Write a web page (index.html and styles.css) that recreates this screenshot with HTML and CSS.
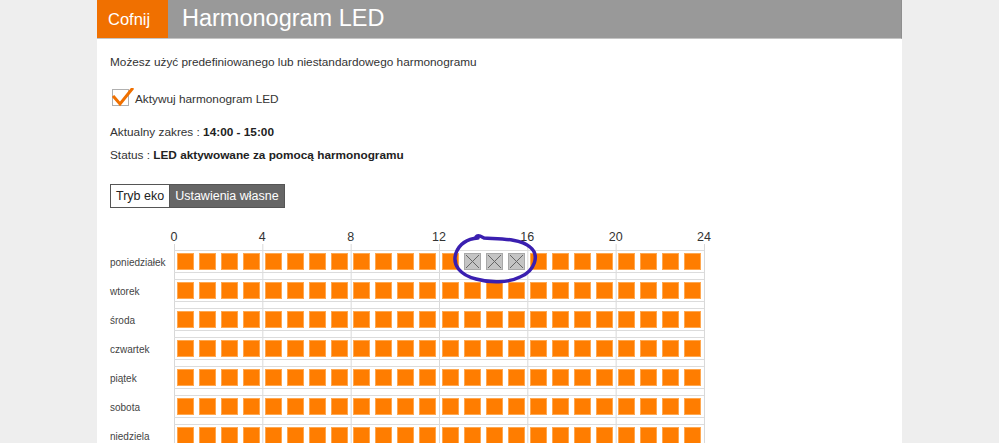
FILE: index.html
```html
<!DOCTYPE html>
<html lang="pl">
<head>
<meta charset="utf-8">
<title>Harmonogram LED</title>
<link rel="stylesheet" href="styles.css">
</head>
<body>
<div class="page">
  <header class="topbar">
    <a class="back">Cofnij</a>
    <h1 class="title">Harmonogram LED</h1>
  </header>
  <main class="content">
    <p class="intro">Możesz użyć predefiniowanego lub niestandardowego harmonogramu</p>
    <label class="check">
      <span class="box"><svg class="tick" width="22" height="20" viewBox="0 0 22 20"><path d="M2 9 L8 16 L20 1" fill="none" stroke="#f07000" stroke-width="3" stroke-linecap="square"/></svg></span>
      <span>Aktywuj harmonogram LED</span>
    </label>
    <p class="info first">Aktualny zakres : <b>14:00 - 15:00</b></p>
    <p class="info">Status : <b>LED aktywowane za pomocą harmonogramu</b></p>
    <div class="tabs">
      <button class="tab">Tryb eko</button>
      <button class="tab active">Ustawienia własne</button>
    </div>
    <div class="schedule" id="schedule">
      <div class="axis"><span>0</span><span>4</span><span>8</span><span>12</span><span>16</span><span>20</span><span>24</span></div>
      <div class="grid" id="grid"></div>
      <svg class="mark" width="110" height="60" viewBox="0 0 110 60"><path d="M26 6 C28 3, 32 6, 34 7 C48 8, 70 7, 80 16 C90 24, 85 40, 70 46 C58 52, 40 52, 26 48 C10 44, 2 34, 6 22 C9 14, 16 8, 28 7" fill="none" stroke="#3a1fb0" stroke-width="3.5" stroke-linecap="round"/></svg>
    </div>
  </main>
</div>
<script>
const days = ["poniedziałek","wtorek","środa","czwartek","piątek","sobota","niedziela"];
const grid = document.getElementById("grid");
days.forEach((d, di) => {
  const lab = document.createElement("span");
  lab.className = "day";
  lab.textContent = d;
  grid.appendChild(lab);
  const track = document.createElement("div");
  track.className = "track";
  for (let h = 0; h < 24; h++) {
    const c = document.createElement("span");
    c.className = "cell";
    const sq = document.createElement("span");
    const off = di === 0 && h >= 13 && h <= 15;
    sq.className = off ? "sq off" : "sq";
    if (off) sq.innerHTML = '<svg width="15" height="15" viewBox="0 0 15 15"><path d="M1 1 L14 14 M14 1 L1 14" stroke="#666" stroke-width="1"/></svg>';
    c.appendChild(sq);
    track.appendChild(c);
  }
  grid.appendChild(track);
});
</script>
</body>
</html>
```
FILE: styles.css
```css
html, body {
  margin: 0;
  padding: 0;
}
body {
  background: #eeeeee;
  font-family: "Liberation Sans", Arial, sans-serif;
  color: #333;
}
.page {
  width: 805px;
  margin: 0 auto;
  background: #fff;
  min-height: 443px;
}
.topbar {
  display: flex;
  height: 38px;
  background: #999999;
  border-bottom: 1px solid #c4c4c4;
  border-right: 1px solid #8e8e8e;
}
.back {
  width: 71px;
  background: #f07000;
  color: #fff;
  font-size: 16.5px;
  line-height: 38px;
  padding-left: 11px;
  box-sizing: border-box;
}
.title {
  margin: 0 0 0 14px;
  font-weight: normal;
  color: #fff;
  font-size: 23.5px;
  line-height: 36px;
}
.content {
  padding: 15px 0 0 13px;
}
.intro {
  margin: 0;
  font-size: 11.8px;
  line-height: 16px;
}
.check {
  display: flex;
  align-items: center;
  gap: 6px;
  margin: 18px 0 0 2px;
  font-size: 11.8px;
  height: 18px;
}
.check span:last-child {
  position: relative;
  top: 2px;
}
.box {
  width: 17px;
  height: 17px;
  border: 1px solid #b0b0b0;
  box-sizing: border-box;
  position: relative;
  background: #fff;
}
.tick {
  position: absolute;
  left: -1px;
  top: -2px;
}
.info {
  margin: 7px 0 0;
  font-size: 11.8px;
  line-height: 16px;
}
.info.first {
  margin-top: 18px;
}
.info b {
  color: #222;
}
.tabs {
  display: flex;
  margin-top: 21px;
}
.tab {
  height: 24px;
  font-family: "Liberation Sans", Arial, sans-serif;
  font-size: 12.5px;
  color: #222;
  background: #fff;
  border: 1px solid #555;
  padding: 0 5px;
  margin: 0;
}
.tab.active {
  background: #666;
  color: #fff;
  border-left: none;
  padding: 0 5px;
}
.schedule {
  position: relative;
  width: 595px;
  margin-top: 22px;
}
.axis {
  display: flex;
  justify-content: space-between;
  margin-left: 54px;
  width: 550px;
  font-size: 12.5px;
  line-height: 14px;
  color: #333;
}
.axis span {
  width: 20px;
  text-align: center;
}
.grid {
  display: grid;
  grid-template-columns: 64px 531px;
  row-gap: 6px;
  padding-top: 6px;
  background: linear-gradient(to right, #d8d8d8 1px, transparent 1px) 64px 0 / 88.33px 100% repeat-x;
}
.day {
  font-size: 10px;
  color: #444;
  display: flex;
  align-items: center;
  padding-top: 1px;
}
.track {
  height: 23px;
  box-sizing: border-box;
  border-top: 1px solid #dcdcdc;
  border-bottom: 1px solid #dcdcdc;
  display: grid;
  grid-template-columns: repeat(24, 1fr);
  width: 530px;
}
.cell {
  display: flex;
  align-items: center;
  justify-content: center;
}
.sq {
  width: 17px;
  height: 17px;
  box-sizing: border-box;
  background: #ff7d00;
  border: 1px solid #ffa850;
  display: flex;
}
.sq.off {
  background: #c4c4c4;
  border: 1px solid #a8a8a8;
}
.sq.off svg {
  display: block;
}
.mark {
  position: absolute;
  left: 340px;
  top: 1px;
}
```
